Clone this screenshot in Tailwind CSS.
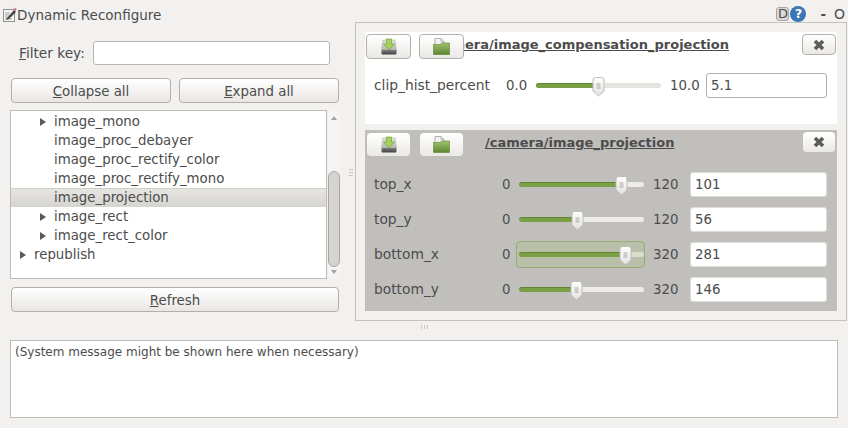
<!DOCTYPE html>
<html lang="en">
<head>
  <meta charset="UTF-8">
  <title>Dynamic Reconfigure</title>
  <script src="https://cdn.jsdelivr.net/npm/@tailwindcss/browser@4"></script>
</head>
<body class="w-[848px] h-[428px] overflow-hidden bg-[#f2f1f0] text-[#4c4c4c] font-['DejaVu_Sans',sans-serif] text-[13.33px] leading-[19px]">

  <!-- shared gradients for the icons -->
  <svg class="absolute w-0 h-0">
    <defs>
      <linearGradient id="knob" x1="0" y1="0" x2="0" y2="1"><stop offset="0" stop-color="#ffffff"/><stop offset="1" stop-color="#e4e2df"/></linearGradient>
      <linearGradient id="folder" x1="0" y1="0" x2="0" y2="1"><stop offset="0" stop-color="#a3c46e"/><stop offset="1" stop-color="#5c8530"/></linearGradient>
      <linearGradient id="drive" x1="0" y1="0" x2="0" y2="1"><stop offset="0" stop-color="#e2e2df"/><stop offset="1" stop-color="#b4b4b0"/></linearGradient>
      <linearGradient id="driveBase" x1="0" y1="0" x2="0" y2="1"><stop offset="0" stop-color="#7b7d7f"/><stop offset="1" stop-color="#3f4143"/></linearGradient>
    </defs>
  </svg>

  <!-- Title bar -->
  <div class="flex items-start h-[22px] pt-[6px] pl-[2px]">
    <svg class="w-[15px] h-[16px]" viewBox="0 0 15 16">
      <rect x="1.5" y="3.5" width="11" height="12" fill="#f6f6f4" stroke="#8f8f8c"/>
      <path d="M3 7h5M3 9h4M3 11h3M3 13h7" stroke="#a4a4a1"/>
      <path d="M5 12l7-8 2 2-7 7-3 1z" fill="#474745"/>
      <path d="M11.5 3.5l1.6-2 1.7 1.7-1.8 2z" fill="#d56fa6"/>
    </svg>
    <span class="text-[13.5px]">Dynamic Reconfigure</span>
    <div class="ml-auto flex items-center mr-[3px] h-[18px] -mt-[1px]">
      <span class="w-[13px] h-[14px] rounded-[3px] border border-[#a8a6a2] bg-[#dcdad7] text-[13px] leading-[12px] text-center">D</span>
      <span class="ml-[1px] w-[16px] h-[16px] rounded-full bg-[#3a75b5] text-white font-bold text-[13px] leading-[16px] text-center">?</span>
      <span class="ml-[14px] font-bold">-</span>
      <span class="ml-[8px] text-[14px]">O</span>
    </div>
  </div>

  <div class="flex h-[299px]">
    <!-- Left column -->
    <div class="ml-[10px] w-[330px] shrink-0">
      <div class="flex items-center h-[24px] mt-[19px] ml-[9px]">
        <label class="w-[74px] text-[13.7px]"><span class="underline">F</span>ilter key:</label>
        <input class="w-[237px] h-[24px] bg-white border border-[#b9b6b1] rounded-[3px]">
      </div>
      <div class="flex gap-[8px] mt-[13px] ml-[1px]">
        <button class="w-[160px] h-[25px] pt-[2px] rounded-[4px] border border-[#b3b0aa] bg-linear-to-b from-white to-[#e9e7e4]"><span class="underline">C</span>ollapse all</button>
        <button class="w-[160px] h-[25px] pt-[2px] rounded-[4px] border border-[#b3b0aa] bg-linear-to-b from-white to-[#e9e7e4]"><span class="underline">E</span>xpand all</button>
      </div>
      <div class="flex mt-[7px] h-[169px]">
        <!-- Tree -->
        <div class="w-[317px] border border-[#bdbbb7] bg-white pt-[1px] overflow-hidden">
          <div class="flex items-center h-[19px] pl-[28px]"><svg class="w-[8px] h-[8px] mr-[7px]" viewBox="0 0 8 8"><path d="M1 0l6 4-6 4z" fill="#5a5a58"/></svg>image_mono</div>
          <div class="h-[19px] pl-[43px]">image_proc_debayer</div>
          <div class="h-[19px] pl-[43px]">image_proc_rectify_color</div>
          <div class="h-[19px] pl-[43px]">image_proc_rectify_mono</div>
          <div class="h-[19px] pl-[43px] bg-linear-to-b from-[#e6e5e2] to-[#d6d4d0] border-t border-[#d0cec9] leading-[17px]">image_projection</div>
          <div class="flex items-center h-[19px] pl-[28px]"><svg class="w-[8px] h-[8px] mr-[7px]" viewBox="0 0 8 8"><path d="M1 0l6 4-6 4z" fill="#5a5a58"/></svg>image_rect</div>
          <div class="flex items-center h-[19px] pl-[28px]"><svg class="w-[8px] h-[8px] mr-[7px]" viewBox="0 0 8 8"><path d="M1 0l6 4-6 4z" fill="#5a5a58"/></svg>image_rect_color</div>
          <div class="flex items-center h-[19px] pl-[8px]"><svg class="w-[8px] h-[8px] mr-[7px]" viewBox="0 0 8 8"><path d="M1 0l6 4-6 4z" fill="#5a5a58"/></svg>republish</div>
        </div>
        <!-- Scrollbar -->
        <div class="ml-[1px] w-[12px] flex flex-col items-center rounded-[5px] bg-[#f6f5f4]">
          <svg class="w-[6px] h-[4px] mt-[6px]" viewBox="0 0 6 4"><path d="M3 0l3 4H0z" fill="#a5a3a0"/></svg>
          <div class="mt-[51px] w-[12px] h-[96px] rounded-[6px] border border-[#a9a7a3] bg-[#d6d4d1]"></div>
          <svg class="w-[6px] h-[4px] mt-[3px]" viewBox="0 0 6 4"><path d="M0 0h6L3 4z" fill="#a5a3a0"/></svg>
        </div>
      </div>
      <button class="mt-[8px] ml-[1px] w-[328px] h-[25px] pt-[2px] rounded-[4px] border border-[#b3b0aa] bg-linear-to-b from-white to-[#e9e7e4]"><span class="underline">R</span>efresh</button>
    </div>

    <!-- Splitter -->
    <div class="w-[15px] shrink-0 flex flex-col items-center gap-[2px] pt-[147px] pl-[6px]">
      <i class="w-[4px] h-px bg-[#c8c6c2]"></i><i class="w-[4px] h-px bg-[#c8c6c2]"></i><i class="w-[4px] h-px bg-[#c8c6c2]"></i>
    </div>

    <!-- Right panel -->
    <div class="w-[492px] h-[299px] border border-[#c5c3be] p-[9px] flex flex-col gap-[6px]">
      <!-- Card 1 -->
      <div class="h-[92px] bg-white pt-[2px]">
        <div class="flex items-start h-[25px]">
          <button class="ml-[1px] w-[45px] h-[25px] rounded-[4px] border border-[#b3b0aa] bg-linear-to-b from-white to-[#ebe9e6] flex items-center justify-center">
            <svg class="w-[16px] h-[17px]" viewBox="0 0 16 17"><path d="M2 2h12l1.5 10h-15z" fill="url(#drive)" stroke="#a9a9a5" stroke-width="0.5"/><path d="M0.5 12h15v3.5a1 1 0 01-1 1h-13a1 1 0 01-1-1z" fill="url(#driveBase)"/><path d="M5.5 1h5v5h3l-5.5 6-5.5-6h3z" fill="#a5d05f" stroke="#7ba63e" stroke-width="0.7"/></svg>
          </button>
          <button class="relative z-10 ml-[8px] w-[45px] h-[25px] rounded-[4px] border border-[#b3b0aa] bg-linear-to-b from-white to-[#ebe9e6] flex items-center justify-center">
            <svg class="w-[17px] h-[17px]" viewBox="0 0 17 17"><path d="M2 .5h6l3 3v5H2z" fill="#f3f3f1" stroke="#a0a09c" stroke-width="0.8"/><path d="M8 .5v3h3" fill="#dcdcd9" stroke="#a0a09c" stroke-width="0.6"/><path d="M.5 6.5h7l1-1.500h8v11.500H.5z" fill="url(#folder)" stroke="#5a7f30" stroke-width="0.6"/></svg>
          </button>
          <h2 class="w-[265px] overflow-hidden font-bold text-[13px] underline whitespace-nowrap mt-[1px] flex justify-end shrink-0">/camera/image_compensation_projection</h2>
          <button class="ml-auto mr-[1px] w-[34px] h-[21px] rounded-[4px] border border-[#b3b0aa] bg-linear-to-b from-white to-[#ebe9e6] flex items-center justify-center">
            <svg class="w-[12px] h-[12px]" viewBox="0 0 12 12"><path d="M2 2l8 8M10 2l-8 8" stroke="#5c5c5a" stroke-width="3.600"/></svg>
          </button>
        </div>
        <div class="flex items-center h-[25px] mt-[14px]">
          <span class="ml-[9px] w-[132px] text-[13.8px]">clip_hist_percent</span>
          <span class="w-[30px]">0.0</span>
          <div class="relative w-[125px] h-[5px] rounded-[3px] bg-[#e6e4e1]">
            <div class="h-full rounded-[3px] bg-[#7a9f45] border-t border-[#5f8433]" style="width: 50%"></div>
            <svg class="absolute left-[56px] -top-[6px] w-[13px] h-[20px]" viewBox="0 0 13 20"><path d="M1 3a2.500 2.500 0 012.500-2.500h6A2.500 2.500 0 0112 3v11l-5.500 5L1 14z" fill="url(#knob)" stroke="#bdbbb6"/><path d="M4.500 7h4M4.500 9h4M4.500 11h4" stroke="#a9a7a3"/></svg>
          </div>
          <span class="ml-[9px] w-[36px]">10.0</span>
          <input value="5.1" class="w-[121px] h-[25px] px-[4px] bg-white border border-[#b3b0aa] rounded-[3px] text-[#4c4c4c]">
        </div>
      </div>

      <!-- Card 2 -->
      <div class="h-[182px] bg-[#c1bfbc] pt-[3px]">
        <div class="flex items-start h-[23px]">
          <button class="ml-[2px] w-[43px] h-[23px] rounded-[4px] bg-linear-to-b from-white to-[#ebe9e6] flex items-center justify-center">
            <svg class="w-[16px] h-[17px]" viewBox="0 0 16 17"><path d="M2 2h12l1.500 10h-15z" fill="url(#drive)" stroke="#a9a9a5" stroke-width="0.5"/><path d="M0.500 12h15v3.500a1 1 0 01-1 1h-13a1 1 0 01-1-1z" fill="url(#driveBase)"/><path d="M5.500 1h5v5h3l-5.500 6-5.500-6h3z" fill="#a5d05f" stroke="#7ba63e" stroke-width="0.7"/></svg>
          </button>
          <button class="ml-[10px] w-[43px] h-[23px] rounded-[4px] bg-linear-to-b from-white to-[#ebe9e6] flex items-center justify-center">
            <svg class="w-[17px] h-[17px]" viewBox="0 0 17 17"><path d="M2 .5h6l3 3v5H2z" fill="#f3f3f1" stroke="#a0a09c" stroke-width="0.8"/><path d="M8 .5v3h3" fill="#dcdcd9" stroke="#a0a09c" stroke-width="0.6"/><path d="M.5 6.500h7l1-1.500h8v11.500H.5z" fill="url(#folder)" stroke="#5a7f30" stroke-width="0.6"/></svg>
          </button>
          <h2 class="ml-[22px] font-bold text-[13px] underline whitespace-nowrap">/camera/image_projection</h2>
          <button class="ml-auto mr-[2px] -mt-[1px] w-[32px] h-[20px] rounded-[4px] bg-linear-to-b from-white to-[#ebe9e6] flex items-center justify-center">
            <svg class="w-[12px] h-[12px]" viewBox="0 0 12 12"><path d="M2 2l8 8M10 2l-8 8" stroke="#5c5c5a" stroke-width="3.600"/></svg>
          </button>
        </div>
        <div class="mt-[16px] flex flex-col gap-[10px]">
          <div class="flex items-center h-[25px]">
            <span class="ml-[9px] w-[128px] text-[13.8px]">top_x</span>
            <span class="w-[17px]">0</span>
            <div class="relative w-[125px] h-[5px] rounded-[3px] bg-[#eeece9]">
              <div class="h-full rounded-[3px] bg-[#7a9f45] border-t border-[#5f8433]" style="width: 82%"></div>
              <svg class="absolute left-[96px] -top-[6px] w-[13px] h-[20px]" viewBox="0 0 13 20"><path d="M1 3a2.500 2.500 0 012.500-2.500h6A2.500 2.500 0 0112 3v11l-5.500 5L1 14z" fill="url(#knob)" stroke="#bdbbb6"/><path d="M4.500 7h4M4.500 9h4M4.500 11h4" stroke="#a9a7a3"/></svg>
            </div>
            <span class="ml-[9px] w-[37px]">120</span>
            <input value="101" class="w-[137px] h-[25px] px-[4px] bg-white border border-[#dddbd8] rounded-[3px] text-[#4c4c4c]">
          </div>
          <div class="flex items-center h-[25px]">
            <span class="ml-[9px] w-[128px] text-[13.8px]">top_y</span>
            <span class="w-[17px]">0</span>
            <div class="relative w-[125px] h-[5px] rounded-[3px] bg-[#eeece9]">
              <div class="h-full rounded-[3px] bg-[#7a9f45] border-t border-[#5f8433]" style="width: 47%"></div>
              <svg class="absolute left-[52px] -top-[6px] w-[13px] h-[20px]" viewBox="0 0 13 20"><path d="M1 3a2.500 2.500 0 012.500-2.500h6A2.500 2.500 0 0112 3v11l-5.500 5L1 14z" fill="url(#knob)" stroke="#bdbbb6"/><path d="M4.500 7h4M4.500 9h4M4.500 11h4" stroke="#a9a7a3"/></svg>
            </div>
            <span class="ml-[9px] w-[37px]">120</span>
            <input value="56" class="w-[137px] h-[25px] px-[4px] bg-white border border-[#dddbd8] rounded-[3px] text-[#4c4c4c]">
          </div>
          <div class="flex items-center h-[25px]">
            <span class="ml-[9px] w-[128px] text-[13.8px]">bottom_x</span>
            <span class="w-[17px]">0</span>
            <div class="relative w-[125px] h-[5px] rounded-[3px] bg-[#dfe3d6]">
              <div class="absolute -left-[3px] -top-[11px] w-[129px] h-[27px] rounded-[4px] border border-[#93ad72] bg-[#b9bfa9]"></div>
              <div class="relative h-[5px] w-[85%] rounded-[3px] bg-[#7a9f45] border-t border-[#5f8433]"></div>
              <div class="absolute right-0 top-0 h-[5px] w-[15%] rounded-[3px] bg-[#d8ddcd]"></div>
              <svg class="absolute left-[100px] -top-[6px] w-[13px] h-[20px]" viewBox="0 0 13 20"><path d="M1 3a2.500 2.500 0 012.500-2.500h6A2.500 2.500 0 0112 3v11l-5.500 5L1 14z" fill="url(#knob)" stroke="#bdbbb6"/><path d="M4.500 7h4M4.500 9h4M4.500 11h4" stroke="#a9a7a3"/></svg>
            </div>
            <span class="ml-[9px] w-[37px]">320</span>
            <input value="281" class="w-[137px] h-[25px] px-[4px] bg-white border border-[#dddbd8] rounded-[3px] text-[#4c4c4c]">
          </div>
          <div class="flex items-center h-[25px]">
            <span class="ml-[9px] w-[128px] text-[13.8px]">bottom_y</span>
            <span class="w-[17px]">0</span>
            <div class="relative w-[125px] h-[5px] rounded-[3px] bg-[#eeece9]">
              <div class="h-full rounded-[3px] bg-[#7a9f45] border-t border-[#5f8433]" style="width: 46%"></div>
              <svg class="absolute left-[51px] -top-[6px] w-[13px] h-[20px]" viewBox="0 0 13 20"><path d="M1 3a2.500 2.500 0 012.500-2.500h6A2.500 2.500 0 0112 3v11l-5.500 5L1 14z" fill="url(#knob)" stroke="#bdbbb6"/><path d="M4.500 7h4M4.500 9h4M4.500 11h4" stroke="#a9a7a3"/></svg>
            </div>
            <span class="ml-[9px] w-[37px]">320</span>
            <input value="146" class="w-[137px] h-[25px] px-[4px] bg-white border border-[#dddbd8] rounded-[3px] text-[#4c4c4c]">
          </div>
        </div>
      </div>
    </div>
  </div>

  <!-- Horizontal splitter grip -->
  <div class="flex justify-center gap-[2px] h-[19px] pt-[4px] pl-[1px]">
    <i class="w-px h-[4px] bg-[#c8c6c2]"></i><i class="w-px h-[4px] bg-[#c8c6c2]"></i><i class="w-px h-[4px] bg-[#c8c6c2]"></i>
  </div>

  <!-- Message box -->
  <div class="ml-[10px] w-[828px] h-[78px] border border-[#bdbbb7] bg-white pl-[4px] pt-[2px] text-[12px]">(System message might be shown here when necessary)</div>

</body>
</html>
